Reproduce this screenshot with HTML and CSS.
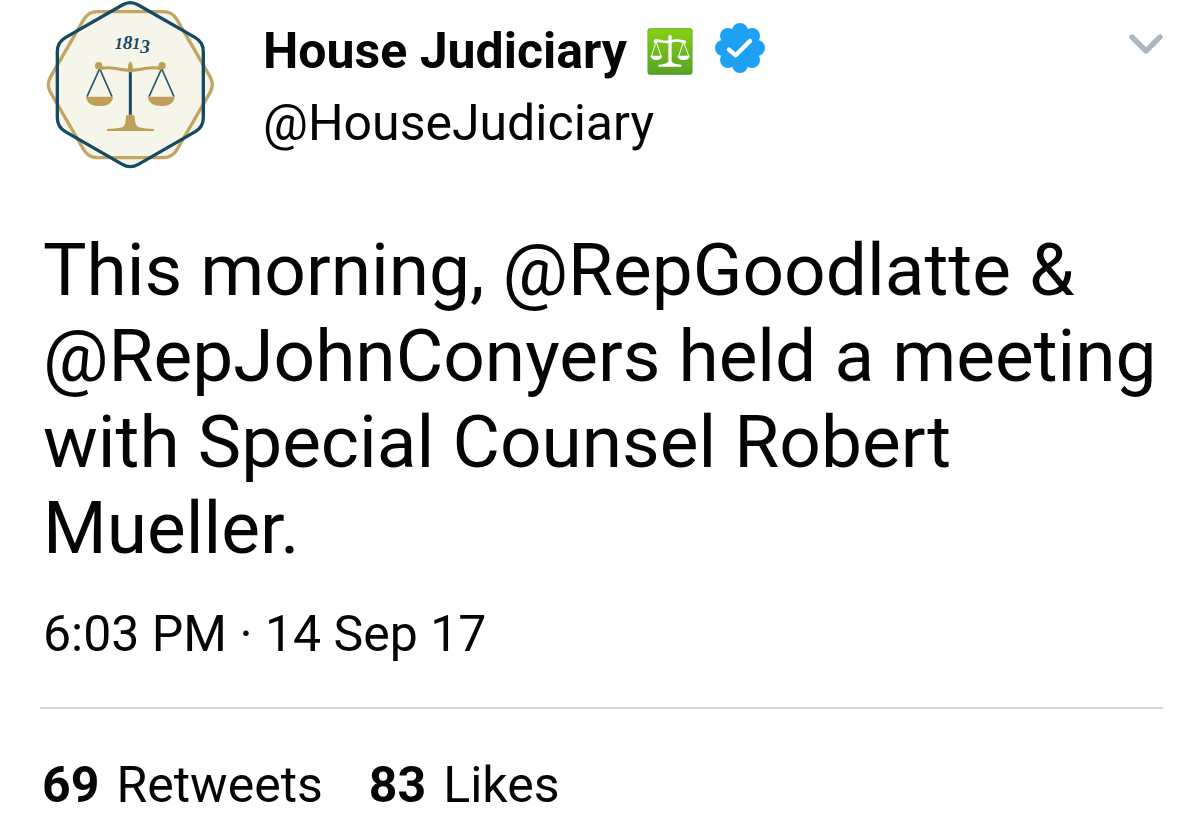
FILE: index.html
```html
<!DOCTYPE html>
<html lang="en">
<head>
<meta charset="utf-8">
<meta name="viewport" content="width=device-width, initial-scale=1">
<title>House Judiciary</title>
<link rel="stylesheet" href="styles.css">
</head>
<body>
<article class="tweet">
  <header class="head">
    <svg class="avatar" viewBox="48 0 504 510" role="img" aria-label="House Judiciary seal">
      <path class="cream" d="M202 35H400Q427 35 441 59L540 230Q554 254 540 278L441 449Q427 473 400 473H202Q175 473 161 449L62 278Q48 254 62 230L161 59Q175 35 202 35Z"/>
      <path class="cream" d="M325 15L496 113Q520 127 520 155V353Q520 380 496 395L325 493Q301 507 277 493L106 395Q82 380 82 353V155Q82 127 106 113L277 15Q301 1 325 15Z"/>
      <path class="ring gold-line" d="M202 35H400Q427 35 441 59L540 230Q554 254 540 278L441 449Q427 473 400 473H202Q175 473 161 449L62 278Q48 254 62 230L161 59Q175 35 202 35Z"/>
      <path class="ring navy-line" d="M325 15L496 113Q520 127 520 155V353Q520 380 496 395L325 493Q301 507 277 493L106 395Q82 380 82 353V155Q82 127 106 113L277 15Q301 1 325 15Z"/>
      <text class="year" x="307" y="147" text-anchor="middle"><tspan class="low">1</tspan>8<tspan class="low">1</tspan><tspan dy="11">3</tspan></text>
      <path class="cord" d="M209 206L171 290M209 206L246 290M395 206L357 290M395 206L432 290"/>
      <path class="post" d="M301 212V350"/>
      <path class="beam" d="M209 207C240 196 262 211 301 211S362 196 395 207"/>
      <circle class="gold" cx="206" cy="197" r="11"/>
      <circle class="gold" cx="396" cy="197" r="11"/>
      <path class="gold" d="M301 184Q310 190 308 217H294Q292 190 301 184Z"/>
      <path class="gold" d="M168 290H249Q247 318 209 318T168 290ZM353 290H434Q431 318 394 318T353 290Z"/>
      <path class="gold" d="M288 348Q301 338 314 348Q314 378 326 382Q345 387 372 387V393H231V387Q258 387 277 382Q288 378 288 348Z"/>
    </svg>
    <div class="who">
      <h1 class="name">
        <span>House Judiciary</span>
        <svg class="scales" viewBox="0 0 138 142" role="img" aria-label="Scales">
          <defs>
            <linearGradient id="leaf" x1="0" y1="0" x2="0" y2="1">
              <stop offset="0" stop-color="#86d012"/>
              <stop offset="1" stop-color="#58a428"/>
            </linearGradient>
          </defs>
          <rect x="1" y="1" width="136" height="140" rx="9" fill="#4c9a1c"/>
          <rect x="3" y="3" width="132" height="134" rx="7" fill="url(#leaf)"/>
          <g fill="none" stroke="#fff" stroke-linecap="round">
            <path stroke-width="8" d="M24 39C38 35 50 46 69 41S101 36 113 43"/>
            <path stroke-width="10" d="M69 28V106"/>
            <path stroke-width="3" d="M27 40L13 86M27 40L42 86M110 42L95 86M110 42L126 86"/>
          </g>
          <g fill="#fff">
            <circle cx="26" cy="40" r="6"/>
            <circle cx="111" cy="42" r="6"/>
            <circle cx="69" cy="26" r="5"/>
            <path d="M9 84H46Q42 97 28 97T9 84ZM91 84H130Q126 97 110 97T91 84ZM62 103H76Q78 110 103 111V117H34V111Q60 110 62 103Z"/>
          </g>
        </svg>
        <svg class="verified" viewBox="0 0 150 150" role="img" aria-label="Verified account">
          <g fill="#1da1f2">
            <circle cx="75" cy="75" r="56"/>
            <circle cx="75" cy="24" r="24"/>
            <circle cx="111" cy="39" r="24"/>
            <circle cx="126" cy="75" r="24"/>
            <circle cx="111" cy="111" r="24"/>
            <circle cx="75" cy="126" r="24"/>
            <circle cx="39" cy="111" r="24"/>
            <circle cx="24" cy="75" r="24"/>
            <circle cx="39" cy="39" r="24"/>
          </g>
          <path d="M42 80L62 97L105 54" fill="none" stroke="#fff" stroke-width="13" stroke-linecap="round" stroke-linejoin="round"/>
        </svg>
      </h1>
      <a class="handle" href="#profile">@HouseJudiciary</a>
    </div>
    <button class="more" type="button" aria-label="More options">
      <svg class="chevron" viewBox="0 0 102 62"><path d="M9 10L51 52L93 10" fill="none" stroke="#aab8c2" stroke-width="16" stroke-linecap="round" stroke-linejoin="round"/></svg>
    </button>
  </header>
  <p class="text">This morning, <a href="#goodlatte">@RepGoodlatte</a> &amp; <a href="#conyers">@RepJohnConyers</a> held a meeting with Special Counsel Robert Mueller.</p>
  <time class="time" datetime="2017-09-14T18:03">6:03 PM · 14 Sep 17</time>
  <footer class="stats">
    <a href="#retweets"><strong>69</strong><span>Retweets</span></a>
    <a href="#likes"><strong>83</strong><span>Likes</span></a>
  </footer>
</article>
</body>
</html>
```
FILE: styles.css
```css
body {
  margin: 0;
  background: #fff;
  color: #050505;
  font-family: Roboto, sans-serif;
  font-size: 50px;
}

a {
  color: inherit;
  text-decoration: none;
}

.tweet {
  padding: 0 37px 0 40px;
}

.head {
  display: flex;
  align-items: flex-start;
}

.avatar {
  flex: none;
  width: 168px;
  height: 170px;
  margin-left: 6px;
}

.cream { fill: #f6f5ea; }
.gold { fill: #bf9f5a; }
.ring { fill: none; stroke-width: 10; }
.gold-line { stroke: #c3a564; }
.navy-line { stroke: #154a66; }
.cord { fill: none; stroke: #2d5a70; stroke-width: 5; }
.post { fill: none; stroke: #154a66; stroke-width: 9; }
.beam { fill: none; stroke: #bf9f5a; stroke-width: 9; }

.year {
  fill: #154a66;
  font: italic bold 58px "Liberation Serif", serif;
}

.low { font-size: 48px; }

.who {
  flex: 1;
  padding: 15px 0 0 49px;
}

.name {
  display: flex;
  align-items: center;
  margin: 0;
  font-size: 50px;
  font-weight: 700;
  line-height: 72px;
}

.scales {
  width: 46px;
  height: 47px;
  margin-left: 20px;
}

.verified {
  width: 50px;
  height: 50px;
  margin: 0 0 6px 22px;
}

.handle {
  display: block;
  line-height: 72px;
}

.more {
  display: flex;
  margin: 33px 0 0;
  padding: 0;
  border: 0;
  background: none;
}

.chevron {
  width: 34px;
  height: 22px;
}

.text {
  margin: 0;
  padding: 57px 0 0 3px;
  font-size: 73px;
  line-height: 86px;
}

.time {
  display: block;
  padding: 33px 0 43px 3px;
  line-height: 60px;
}

.stats {
  display: flex;
  gap: 46px;
  padding: 46px 0 24px 2px;
  border-top: 2px solid #d3d9dd;
  line-height: 60px;
}

.stats a {
  display: flex;
  gap: 17px;
}
```
